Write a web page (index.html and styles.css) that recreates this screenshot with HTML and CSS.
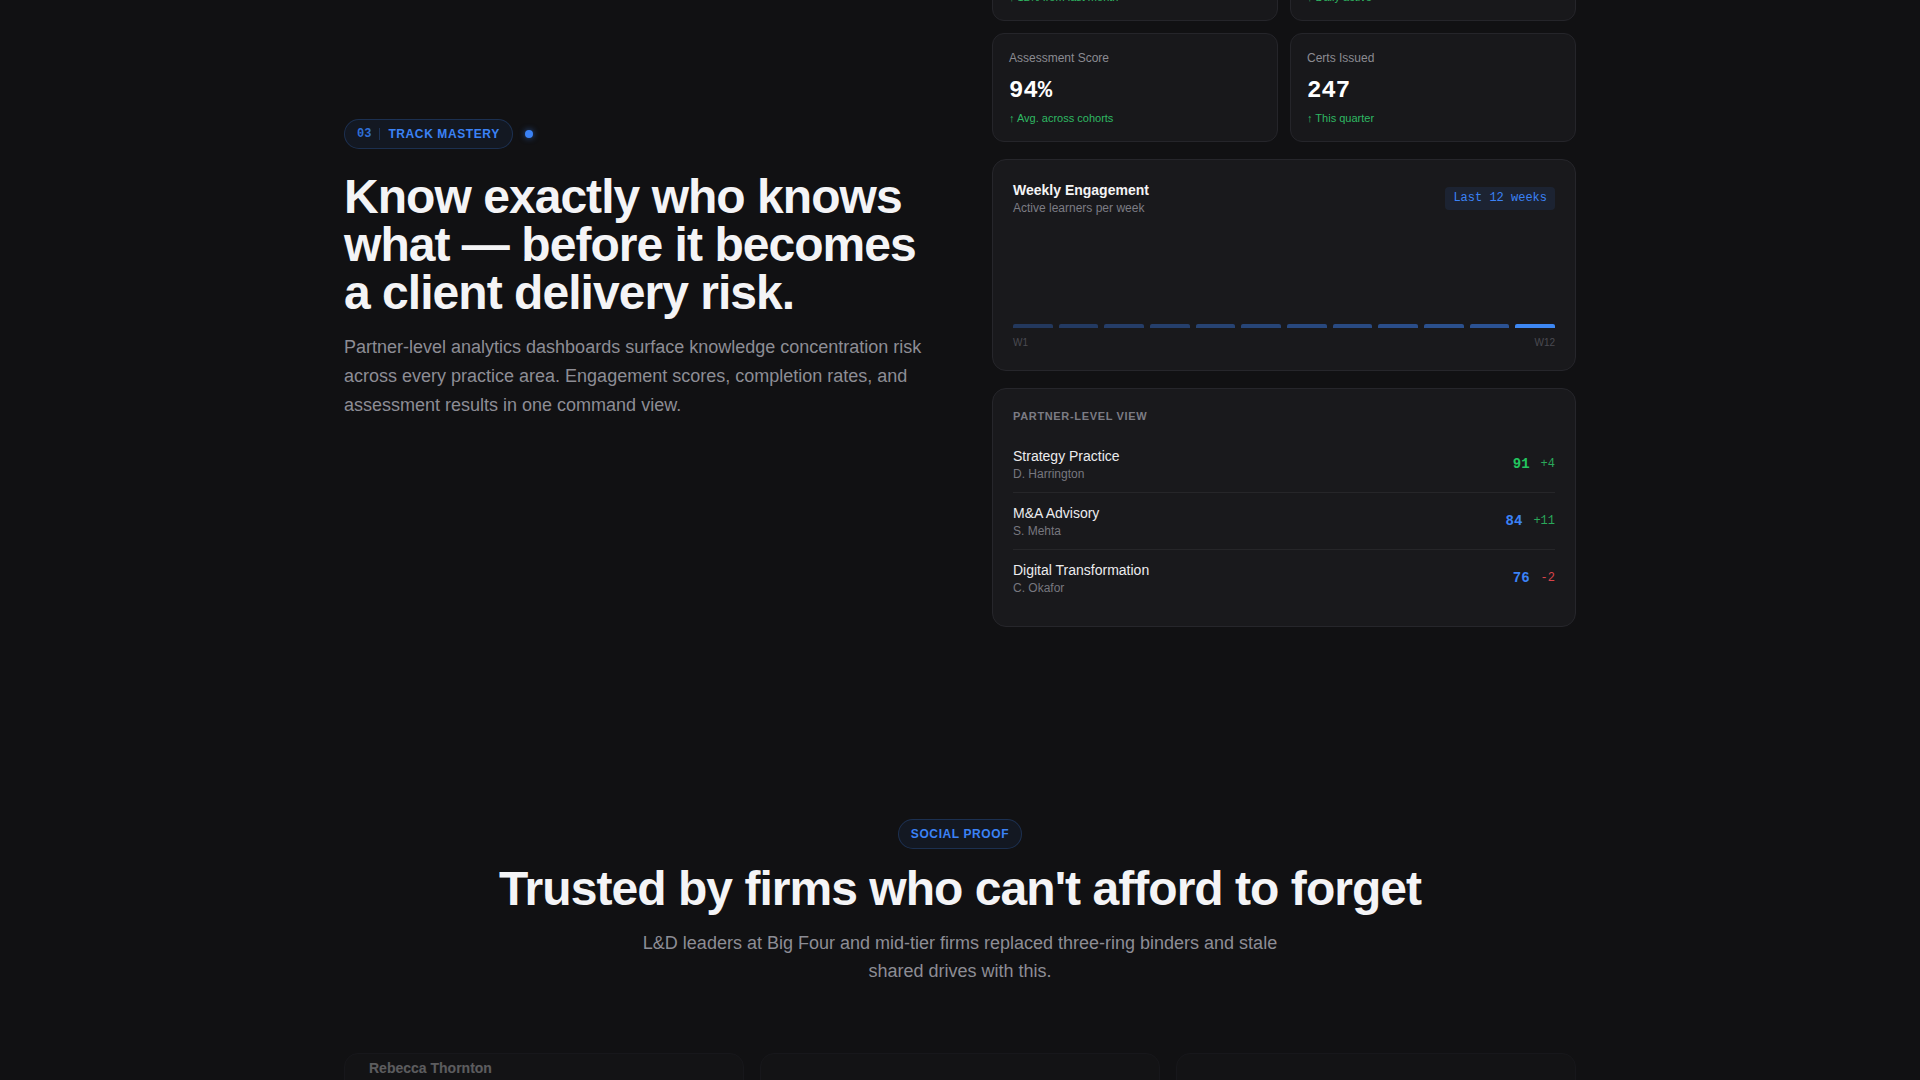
FILE: index.html
```html
<!DOCTYPE html>
<html lang="en">
<head>
<meta charset="utf-8">
<title>Track Mastery</title>
<link rel="stylesheet" href="styles.css">
</head>
<body>
<main>
  <section class="feature">
    <div class="container feature-grid">
      <div class="feature-copy">
        <div class="eyebrow-row">
          <span class="pill"><span class="pill-num">03</span><span class="pill-sep"></span><span class="pill-text">TRACK MASTERY</span></span>
          <span class="pulse-dot"></span>
        </div>
        <h2 class="headline">Know exactly who knows what — before it becomes a client delivery risk.</h2>
        <p class="lede">Partner-level analytics dashboards surface knowledge concentration risk across every practice area. Engagement scores, completion rates, and assessment results in one command view.</p>
      </div>

      <div class="dashboard">
        <div class="stat-grid">
          <div class="stat">
            <div class="stat-label">Active Learners</div>
            <div class="stat-value">1,284</div>
            <div class="stat-sub">↑ 12% from last month</div>
          </div>
          <div class="stat">
            <div class="stat-label">Completion Rate</div>
            <div class="stat-value">87%</div>
            <div class="stat-sub">↑ Daily active</div>
          </div>
          <div class="stat">
            <div class="stat-label">Assessment Score</div>
            <div class="stat-value">94%</div>
            <div class="stat-sub">↑ Avg. across cohorts</div>
          </div>
          <div class="stat">
            <div class="stat-label">Certs Issued</div>
            <div class="stat-value">247</div>
            <div class="stat-sub">↑ This quarter</div>
          </div>
        </div>

        <div class="panel chart-panel">
          <div class="panel-head">
            <div>
              <div class="panel-title">Weekly Engagement</div>
              <div class="panel-sub">Active learners per week</div>
            </div>
            <span class="range-tag">Last 12 weeks</span>
          </div>
          <div class="bars">
            <span class="bar"></span><span class="bar"></span><span class="bar"></span>
            <span class="bar"></span><span class="bar"></span><span class="bar"></span>
            <span class="bar"></span><span class="bar"></span><span class="bar"></span>
            <span class="bar"></span><span class="bar"></span><span class="bar"></span>
          </div>
          <div class="bar-axis"><span>W1</span><span>W12</span></div>
        </div>

        <div class="panel partner-panel">
          <div class="panel-kicker">PARTNER-LEVEL VIEW</div>
          <ul class="partner-list">
            <li class="partner-row">
              <div>
                <div class="practice">Strategy Practice</div>
                <div class="partner">D. Harrington</div>
              </div>
              <div class="scores"><span class="score score-high">91</span><span class="delta up">+4</span></div>
            </li>
            <li class="partner-row">
              <div>
                <div class="practice">M&amp;A Advisory</div>
                <div class="partner">S. Mehta</div>
              </div>
              <div class="scores"><span class="score score-mid">84</span><span class="delta up">+11</span></div>
            </li>
            <li class="partner-row">
              <div>
                <div class="practice">Digital Transformation</div>
                <div class="partner">C. Okafor</div>
              </div>
              <div class="scores"><span class="score score-mid">76</span><span class="delta down">-2</span></div>
            </li>
          </ul>
        </div>
      </div>
    </div>
  </section>

  <section class="proof">
    <div class="container proof-inner">
      <span class="pill pill-center"><span class="pill-text">SOCIAL PROOF</span></span>
      <h2 class="proof-title">Trusted by firms who can't afford to forget</h2>
      <p class="proof-sub">L&amp;D leaders at Big Four and mid-tier firms replaced three-ring binders and stale shared drives with this.</p>

      <div class="quotes">
        <article class="quote-card quote-lead">
          <div class="quote-name">Rebecca Thornton</div>
          <div class="quote-role">Director of Learning, Big Four</div>
        </article>
        <article class="quote-card">
          <div class="quote-mark">“</div>
          <p class="quote-text">Our onboarding time for new associates dropped by a third in the first quarter.</p>
        </article>
        <article class="quote-card">
          <div class="quote-mark">“</div>
          <p class="quote-text">For the first time we can see which practice areas depend on a single expert.</p>
        </article>
      </div>
    </div>
  </section>
</main>
</body>
</html>
```

FILE: styles.css
```css
* {
  box-sizing: border-box;
  margin: 0;
  padding: 0;
}

html,
body {
  height: 100%;
  overflow: hidden;
}

body {
  background: #111113;
  color: #f4f4f5;
  font-family: "Liberation Sans", Arial, sans-serif;
  -webkit-font-smoothing: antialiased;
}

.container {
  max-width: 1280px;
  margin: 0 auto;
  padding: 0 24px;
}

/* ---------- pills ---------- */
.pill {
  display: inline-flex;
  align-items: center;
  gap: 8px;
  height: 30px;
  padding: 0 12px;
  border: 1px solid rgba(59, 130, 246, 0.22);
  background: rgba(59, 130, 246, 0.07);
  border-radius: 999px;
}

.pill-num {
  font-family: "Liberation Mono", monospace;
  font-size: 12px;
  font-weight: 700;
  color: #2f6fd8;
}

.pill-sep {
  width: 1px;
  height: 12px;
  background: rgba(59, 130, 246, 0.25);
}

.pill-text {
  font-size: 12px;
  line-height: 16px;
  font-weight: 700;
  letter-spacing: 0.05em;
  color: #3b82f6;
}

/* ---------- feature section ---------- */
.feature {
  margin-top: -88px;
  padding-bottom: 96px;
}

.feature-grid {
  display: grid;
  grid-template-columns: 1fr 1fr;
  gap: 64px;
  align-items: center;
}

.eyebrow-row {
  display: flex;
  align-items: center;
  gap: 12px;
}

.pulse-dot {
  width: 8px;
  height: 8px;
  border-radius: 50%;
  background: #3b82f6;
  box-shadow: 0 0 6px rgba(59, 130, 246, 0.6);
}

.headline {
  margin-top: 24px;
  font-size: 48px;
  line-height: 1;
  font-weight: 700;
  letter-spacing: -0.02em;
  color: #f4f4f6;
}

.lede {
  margin-top: 16px;
  font-size: 18px;
  line-height: 1.625;
  color: #8d8d95;
}

/* ---------- dashboard ---------- */
.dashboard {
  display: flex;
  flex-direction: column;
  gap: 17px;
}

.stat-grid {
  display: grid;
  grid-template-columns: 1fr 1fr;
  gap: 12px;
}

.stat {
  background: #18181b;
  border: 1px solid #25252a;
  border-radius: 12px;
  padding: 15px 16px;
}

.stat-label {
  font-size: 12px;
  line-height: 18px;
  color: #8b8b92;
}

.stat-value {
  margin-top: 10px;
  font-family: "Liberation Mono", monospace;
  font-size: 24px;
  line-height: 28px;
  font-weight: 700;
  color: #ffffff;
}

.stat-sub {
  margin-top: 5px;
  font-size: 11px;
  line-height: 16px;
  color: #2fb863;
}

.panel {
  background: #19191c;
  border: 1px solid #26262b;
  border-radius: 14px;
  padding: 20px;
}

.panel-head {
  display: flex;
  justify-content: space-between;
  align-items: center;
}

.panel-title {
  font-size: 14px;
  line-height: 20px;
  font-weight: 700;
  color: #f4f4f5;
}

.panel-sub {
  font-size: 12px;
  line-height: 16px;
  color: #7c7c84;
}

.range-tag {
  font-family: "Liberation Mono", monospace;
  font-size: 12px;
  line-height: 15px;
  padding: 4px 8px;
  border-radius: 4px;
  background: rgba(59, 130, 246, 0.1);
  color: #3b82f6;
}

.bars {
  margin-top: 12px;
  height: 100px;
  display: flex;
  align-items: flex-end;
  gap: 6px;
}

.bar {
  flex: 1;
  height: 4px;
  border-radius: 2px 2px 0 0;
  background: #3b82f6;
}

.bar:nth-child(1) { opacity: 0.30; }
.bar:nth-child(2) { opacity: 0.32; }
.bar:nth-child(3) { opacity: 0.35; }
.bar:nth-child(4) { opacity: 0.37; }
.bar:nth-child(5) { opacity: 0.40; }
.bar:nth-child(6) { opacity: 0.42; }
.bar:nth-child(7) { opacity: 0.45; }
.bar:nth-child(8) { opacity: 0.47; }
.bar:nth-child(9) { opacity: 0.50; }
.bar:nth-child(10) { opacity: 0.52; }
.bar:nth-child(11) { opacity: 0.55; }
.bar:nth-child(12) { opacity: 1; background: #3d87f2; }

.bar-axis {
  margin-top: 8px;
  display: flex;
  justify-content: space-between;
  font-size: 10px;
  line-height: 14px;
  color: #4a4a51;
}

.panel-kicker {
  font-size: 11px;
  line-height: 14px;
  font-weight: 700;
  letter-spacing: 0.06em;
  color: #7c7c84;
  margin-bottom: 13px;
}

.partner-list {
  list-style: none;
}

.partner-row {
  display: flex;
  justify-content: space-between;
  align-items: center;
  padding: 10px 0;
}

.partner-row + .partner-row {
  border-top: 1px solid rgba(255, 255, 255, 0.06);
}

.practice {
  font-size: 14px;
  line-height: 20px;
  color: #ececee;
}

.partner {
  font-size: 12px;
  line-height: 16px;
  color: #77777f;
}

.scores {
  display: flex;
  align-items: center;
  gap: 11px;
  font-family: "Liberation Mono", monospace;
}

.score {
  font-size: 14px;
  font-weight: 700;
}

.score-high { color: #22c55e; }
.score-mid { color: #3b82f6; }

.delta {
  font-size: 12px;
}

.delta.up { color: #2aa85a; }
.delta.down { color: #d9434a; }

/* ---------- social proof ---------- */
.proof {
  padding-top: 96px;
}

.proof-inner {
  display: flex;
  flex-direction: column;
  align-items: center;
  text-align: center;
}

.proof-title {
  margin-top: 16px;
  font-size: 48px;
  line-height: 1;
  font-weight: 700;
  letter-spacing: -0.02em;
  color: #f4f4f6;
}

.proof-sub {
  margin-top: 17px;
  max-width: 640px;
  font-size: 18px;
  line-height: 1.55;
  color: #8d8d95;
}

.quotes {
  margin-top: 67px;
  width: 100%;
  display: grid;
  grid-template-columns: repeat(3, 1fr);
  gap: 16px;
  text-align: left;
}

.quote-card {
  min-height: 220px;
  background: #17171a;
  border: 1px solid #24242a;
  border-radius: 14px;
  padding: 24px;
  opacity: 0.35;
}

.quote-lead {
  padding-top: 4px;
}

.quote-name {
  font-size: 14px;
  line-height: 20px;
  font-weight: 700;
  color: #e8e8ea;
}

.quote-role {
  font-size: 12px;
  line-height: 16px;
  color: #8d8d95;
}

.quote-mark {
  font-family: "Liberation Serif", serif;
  font-size: 48px;
  line-height: 40px;
  color: #8d8d95;
}

.quote-text {
  margin-top: 8px;
  font-size: 15px;
  line-height: 1.6;
  color: #c8c8cc;
}
```
